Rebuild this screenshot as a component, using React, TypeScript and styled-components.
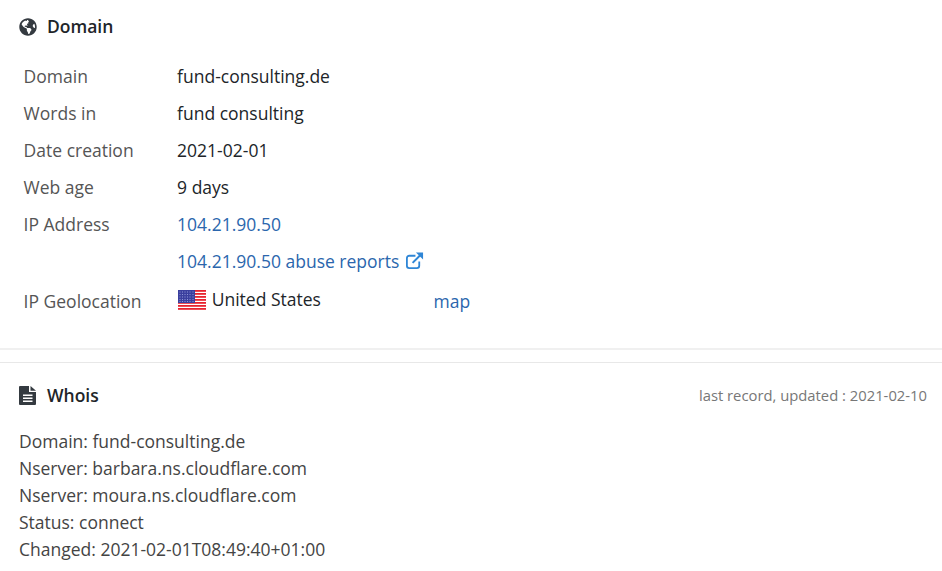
import React from "react";
import styled, { createGlobalStyle } from "styled-components";
import { FaGlobeAmericas } from "react-icons/fa";

const Global = createGlobalStyle`
  html, body { margin: 0; padding: 0; background: #fff; overflow: hidden; }
  body { font-family: "Open Sans", "Liberation Sans", sans-serif; font-size: 17.5px; color: #212529; }
`;

const Page = styled.div`
  width: 942px;
  height: 571px;
  overflow: hidden;
`;

const DomainSection = styled.section`
  height: 350px;
  padding: 13px 15px 0 19px;
  box-sizing: border-box;
  border-bottom: 2px solid #f0f0f0;
`;

const WhoisSection = styled.section`
  margin-top: 12px;
  border-top: 1px solid #e8e8e8;
  padding: 19px 15px 0 19px;
`;

const HeaderRow = styled.header`
  display: flex;
  align-items: center;
  justify-content: space-between;
  height: 27px;
`;

const Title = styled.h2`
  display: flex;
  align-items: center;
  margin: 0;
  font-size: 17.5px;
  line-height: 27px;
  font-weight: 600;
  color: #212529;
`;

const TitleIcon = styled.span`
  display: inline-flex;
  justify-content: flex-start;
  width: 28px;
  color: #343a40;
  font-size: 18px;
`;

const Updated = styled.span`
  font-size: 14.8px;
  color: #777;
  padding-bottom: 2px;
`;

const InfoTable = styled.div`
  margin: 17px 0 0 4.6px;
  display: grid;
  grid-template-columns: 153.5px 256.5px auto;
  grid-auto-rows: 37px;
  align-items: center;
  justify-content: start;
`;

const Label = styled.div`
  color: #555;
  grid-column: 1;
`;

const Value = styled.div`
  color: #212529;
  grid-column: 2 / span 2;
`;

const LinkValue = styled.a`
  color: #2b66ad;
  text-decoration: none;
  grid-column: 2 / span 2;
  white-space: nowrap;
`;

const GeoRow = styled.div`
  grid-column: 1 / -1;
  align-self: start;
  display: grid;
  grid-template-columns: 153.5px 256.5px auto;
  align-items: center;
  height: 37px;
  margin-top: 3px;
`;

const Country = styled.div`
  display: flex;
  align-items: center;
  gap: 6px;
  color: #212529;
`;

const CountryName = styled.span`
  padding-bottom: 4px;
`;

const FlagGraphic = styled.svg`
  margin: 0 0 1px 0.6px;
  flex: none;
`;

const MapLink = styled.a`
  color: #2b66ad;
  text-decoration: none;
`;

const ExternalIcon = styled.svg`
  width: 19px;
  height: 19px;
  margin-left: 6px;
  vertical-align: -2px;
  color: #2f86d6;
`;

const WhoisBody = styled.div`
  margin-top: 19px;
  line-height: 27px;
  color: #444;
`;

const Flag = () => (
  <FlagGraphic width="28" height="21" viewBox="0 0 28 21" aria-hidden="true">
    <rect width="28" height="21" fill="#fff" />
    {[0, 3, 6, 9, 12, 15, 18].map((y) => (
      <rect key={y} y={y} width="28" height="1.8" fill="#e8232f" />
    ))}
    <rect width="17" height="13" fill="#3b3f9e" />
    {[1.5, 4, 6.5, 9, 11].map((y) =>
      [1.5, 4, 6.5, 9, 11.5, 14.5].map((x) => (
        <rect key={`${x}-${y}`} x={x} y={y} width="1" height="1" fill="#8f95d6" />
      ))
    )}
  </FlagGraphic>
);

const FileIcon = () => (
  <svg width="18" height="19" viewBox="0 0 18 19" aria-hidden="true">
    <path d="M0 1a1 1 0 0 1 1-1h9v6h7v12a1 1 0 0 1-1 1H1a1 1 0 0 1-1-1Z" fill="#343a40" />
    <path d="M11.5 0 17 4.8h-5.5Z" fill="#343a40" />
    <path d="M4 8.5h9.5v1.5H4ZM4 11.5h9.5V13H4ZM4 14.5h9.5V16H4Z" fill="#fff" />
  </svg>
);

const External = () => (
  <ExternalIcon viewBox="0 0 20 20" aria-hidden="true" fill="none" stroke="currentColor">
    <path d="M15 11v4.5a2.5 2.5 0 0 1-2.5 2.5h-8A2.5 2.5 0 0 1 2 15.5v-8A2.5 2.5 0 0 1 4.5 5H11" strokeWidth="1.9" />
    <path d="M8 12.5 17 3.5" strokeWidth="2.2" />
    <path d="M11.5 1.5H19V9Z" fill="currentColor" stroke="none" />
  </ExternalIcon>
);

export default function App() {
  return (
    <Page>
      <Global />
      <DomainSection>
        <HeaderRow>
          <Title>
            <TitleIcon><FaGlobeAmericas /></TitleIcon>
            Domain
          </Title>
        </HeaderRow>
        <InfoTable>
          <Label>Domain</Label>
          <Value>fund-consulting.de</Value>
          <Label>Words in</Label>
          <Value>fund consulting</Value>
          <Label>Date creation</Label>
          <Value>2021-02-01</Value>
          <Label>Web age</Label>
          <Value>9 days</Value>
          <Label>IP Address</Label>
          <LinkValue href="#">104.21.90.50</LinkValue>
          <Label />
          <LinkValue href="#">104.21.90.50 abuse reports<External /></LinkValue>
          <GeoRow>
            <Label>IP Geolocation</Label>
            <Country><Flag /><CountryName>United States</CountryName></Country>
            <MapLink href="#">map</MapLink>
          </GeoRow>
        </InfoTable>
      </DomainSection>
      <WhoisSection>
        <HeaderRow>
          <Title>
            <TitleIcon><FileIcon /></TitleIcon>
            Whois
          </Title>
          <Updated>last record, updated : 2021-02-10</Updated>
        </HeaderRow>
        <WhoisBody>
          <div>Domain: fund-consulting.de</div>
          <div>Nserver: barbara.ns.cloudflare.com</div>
          <div>Nserver: moura.ns.cloudflare.com</div>
          <div>Status: connect</div>
          <div>Changed: 2021-02-01T08:49:40+01:00</div>
        </WhoisBody>
      </WhoisSection>
    </Page>
  );
}
